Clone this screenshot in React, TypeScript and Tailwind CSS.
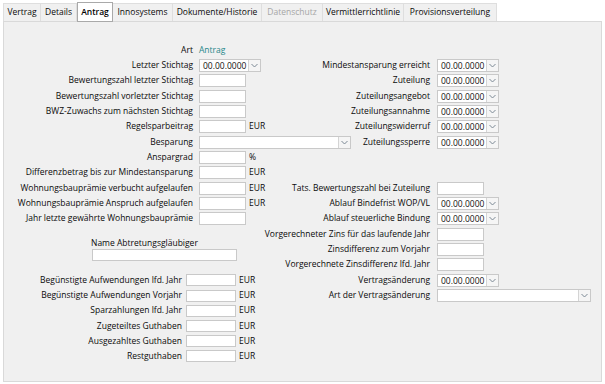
import React from "react";

const tabs = [
  { label: "Vertrag", w: "w-[38px]", first: true },
  { label: "Details", w: "w-[36px]" },
  { label: "Antrag", w: "w-[36px]", active: true },
  { label: "Innosystems", w: "w-[60px]" },
  { label: "Dokumente/Historie", w: "w-[89px]" },
  { label: "Datenschutz", w: "w-[61px]", disabled: true },
  { label: "Vermittlerrichtlinie", w: "w-[81px]" },
  { label: "Provisionsverteilung", w: "w-[93px]" },
];

function Chevron() {
  return (
    <svg width="7" height="5" viewBox="0 0 7 5" className="text-[#7d8995]">
      <path d="M0.5 1 L3.5 4 L6.5 1" fill="none" stroke="currentColor" strokeWidth="1" />
    </svg>
  );
}

function TextBox({ w = "w-[47px]", h = "h-[13px]" }: { w?: string; h?: string }) {
  return <div className={`${w} ${h} shrink-0 bg-white border border-[#c9c9c9]`} />;
}

function DateBox({ w = "w-[62px]", value = "00.00.0000" }: { w?: string; value?: string }) {
  return (
    <div className={`${w} h-[13px] shrink-0 flex bg-white border border-[#c9c9c9]`}>
      <div className="flex-1 pl-[3px] leading-[11px] text-[#111]">{value}</div>
      <div className="w-[12px] flex items-center justify-center bg-[#f5f5f5] border-l border-[#d4d4d4]">
        <Chevron />
      </div>
    </div>
  );
}

function Unit({ children }: { children: React.ReactNode }) {
  return <span className="ml-[3px]">{children}</span>;
}

// one row of the upper block: left label/control, right label/control
function Row({
  left,
  leftCtl,
  right,
  rightCtl,
}: {
  left?: string;
  leftCtl?: React.ReactNode;
  right?: string;
  rightCtl?: React.ReactNode;
}) {
  return (
    <div className="flex items-center h-[15.33px] whitespace-nowrap">
      <div className="w-[189px] text-right">{left}</div>
      <div className="ml-[6px] flex items-center">{leftCtl}</div>
      <div className="flex-1 text-right">{right}</div>
      <div className="w-[171px] pl-[7px] flex items-center">{rightCtl}</div>
    </div>
  );
}

function RightRow({ label, ctl }: { label: string; ctl: React.ReactNode }) {
  return (
    <div className="flex items-center h-[15.33px] whitespace-nowrap">
      <div className="flex-1 text-right">{label}</div>
      <div className="w-[171px] pl-[7px] flex items-center">{ctl}</div>
    </div>
  );
}

function BottomRow({ label }: { label: string }) {
  return (
    <div className="flex items-center h-[15.2px] whitespace-nowrap">
      <div className="w-[178px] text-right">{label}</div>
      <div className="ml-[4px]">
        <TextBox w="w-[50px]" h="h-[12px]" />
      </div>
      <Unit>EUR</Unit>
    </div>
  );
}

export default function App() {
  return (
    <div
      className="w-[605px] h-[384px] bg-white text-[8.5px] text-[#0a0a0a] overflow-hidden"
      style={{ fontFamily: "'Open Sans', 'Noto Sans', sans-serif" }}
    >
      {/* tab strip */}
      <div className="flex pl-[3px] pt-[3px] h-[21px] relative z-10">
        {tabs.map((t) =>
          t.active ? (
            <div
              key={t.label}
              className={`${t.w} -mt-[1px] h-[20px] flex items-center justify-center bg-white border border-[#a9a9a9] font-semibold text-[#000]`}
            >
              {t.label}
            </div>
          ) : (
            <div
              key={t.label}
              className={`${t.w} h-[18px] flex items-center justify-center bg-[#f0f0f0] border-t border-r border-[#dedede] ${
                t.first ? "border-l" : ""
              } ${t.disabled ? "text-[#a6a6a6]" : "text-[#0a0a0a]"}`}
            >
              {t.label}
            </div>
          )
        )}
      </div>

      {/* panel */}
      <div className="ml-[3px] w-[599px] h-[361px] bg-[#f0f0f0] border border-[#d9d9d9] pt-[20.5px]">
        <Row left="Art" leftCtl={<span className="text-[#27878b]">Antrag</span>} />
        <Row left="Letzter Stichtag" leftCtl={<DateBox />} right="Mindestansparung erreicht" rightCtl={<DateBox />} />
        <Row left="Bewertungszahl letzter Stichtag" leftCtl={<TextBox />} right="Zuteilung" rightCtl={<DateBox />} />
        <Row left="Bewertungszahl vorletzter Stichtag" leftCtl={<TextBox />} right="Zuteilungsangebot" rightCtl={<DateBox />} />
        <Row left="BWZ-Zuwachs zum nächsten Stichtag" leftCtl={<TextBox />} right="Zuteilungsannahme" rightCtl={<DateBox />} />
        <Row
          left="Regelsparbeitrag"
          leftCtl={
            <>
              <TextBox />
              <Unit>EUR</Unit>
            </>
          }
          right="Zuteilungswiderruf"
          rightCtl={<DateBox />}
        />
        <Row left="Besparung" leftCtl={<DateBox w="w-[152px]" value="" />} right="Zuteilungssperre" rightCtl={<DateBox />} />
        <Row
          left="Anspargrad"
          leftCtl={
            <>
              <TextBox />
              <Unit>%</Unit>
            </>
          }
        />
        <Row
          left="Differenzbetrag bis zur Mindestansparung"
          leftCtl={
            <>
              <TextBox />
              <Unit>EUR</Unit>
            </>
          }
        />
        <Row
          left="Wohnungsbauprämie verbucht aufgelaufen"
          leftCtl={
            <>
              <TextBox />
              <Unit>EUR</Unit>
            </>
          }
          right="Tats. Bewertungszahl bei Zuteilung"
          rightCtl={<TextBox />}
        />
        <Row
          left="Wohnungsbauprämie Anspruch aufgelaufen"
          leftCtl={
            <>
              <TextBox />
              <Unit>EUR</Unit>
            </>
          }
          right="Ablauf Bindefrist WOP/VL"
          rightCtl={<DateBox />}
        />
        <Row
          left="Jahr letzte gewährte Wohnungsbauprämie"
          leftCtl={<TextBox />}
          right="Ablauf steuerliche Bindung"
          rightCtl={<DateBox />}
        />

        {/* lower block */}
        <div className="flex">
          <div className="w-[258px]">
            <div className="mt-[11px] pl-[87px] h-[12px] leading-[12px] whitespace-nowrap">Name Abtretungsgläubiger</div>
            <div className="ml-[88px]">
              <TextBox w="w-[145px]" h="h-[12px]" />
            </div>
            <div className="mt-[11.4px]">
              <BottomRow label="Begünstigte Aufwendungen lfd. Jahr" />
              <BottomRow label="Begünstigte Aufwendungen Vorjahr" />
              <BottomRow label="Sparzahlungen lfd. Jahr" />
              <BottomRow label="Zugeteiltes Guthaben" />
              <BottomRow label="Ausgezahltes Guthaben" />
              <BottomRow label="Restguthaben" />
            </div>
          </div>
          <div className="flex-1">
            <RightRow label="Vorgerechneter Zins für das laufende Jahr" ctl={<TextBox />} />
            <RightRow label="Zinsdifferenz zum Vorjahr" ctl={<TextBox />} />
            <RightRow label="Vorgerechnete Zinsdifferenz lfd. Jahr" ctl={<TextBox />} />
            <RightRow label="Vertragsänderung" ctl={<DateBox />} />
            <RightRow label="Art der Vertragsänderung" ctl={<DateBox w="w-[154px]" value="" />} />
          </div>
        </div>
      </div>
    </div>
  );
}
